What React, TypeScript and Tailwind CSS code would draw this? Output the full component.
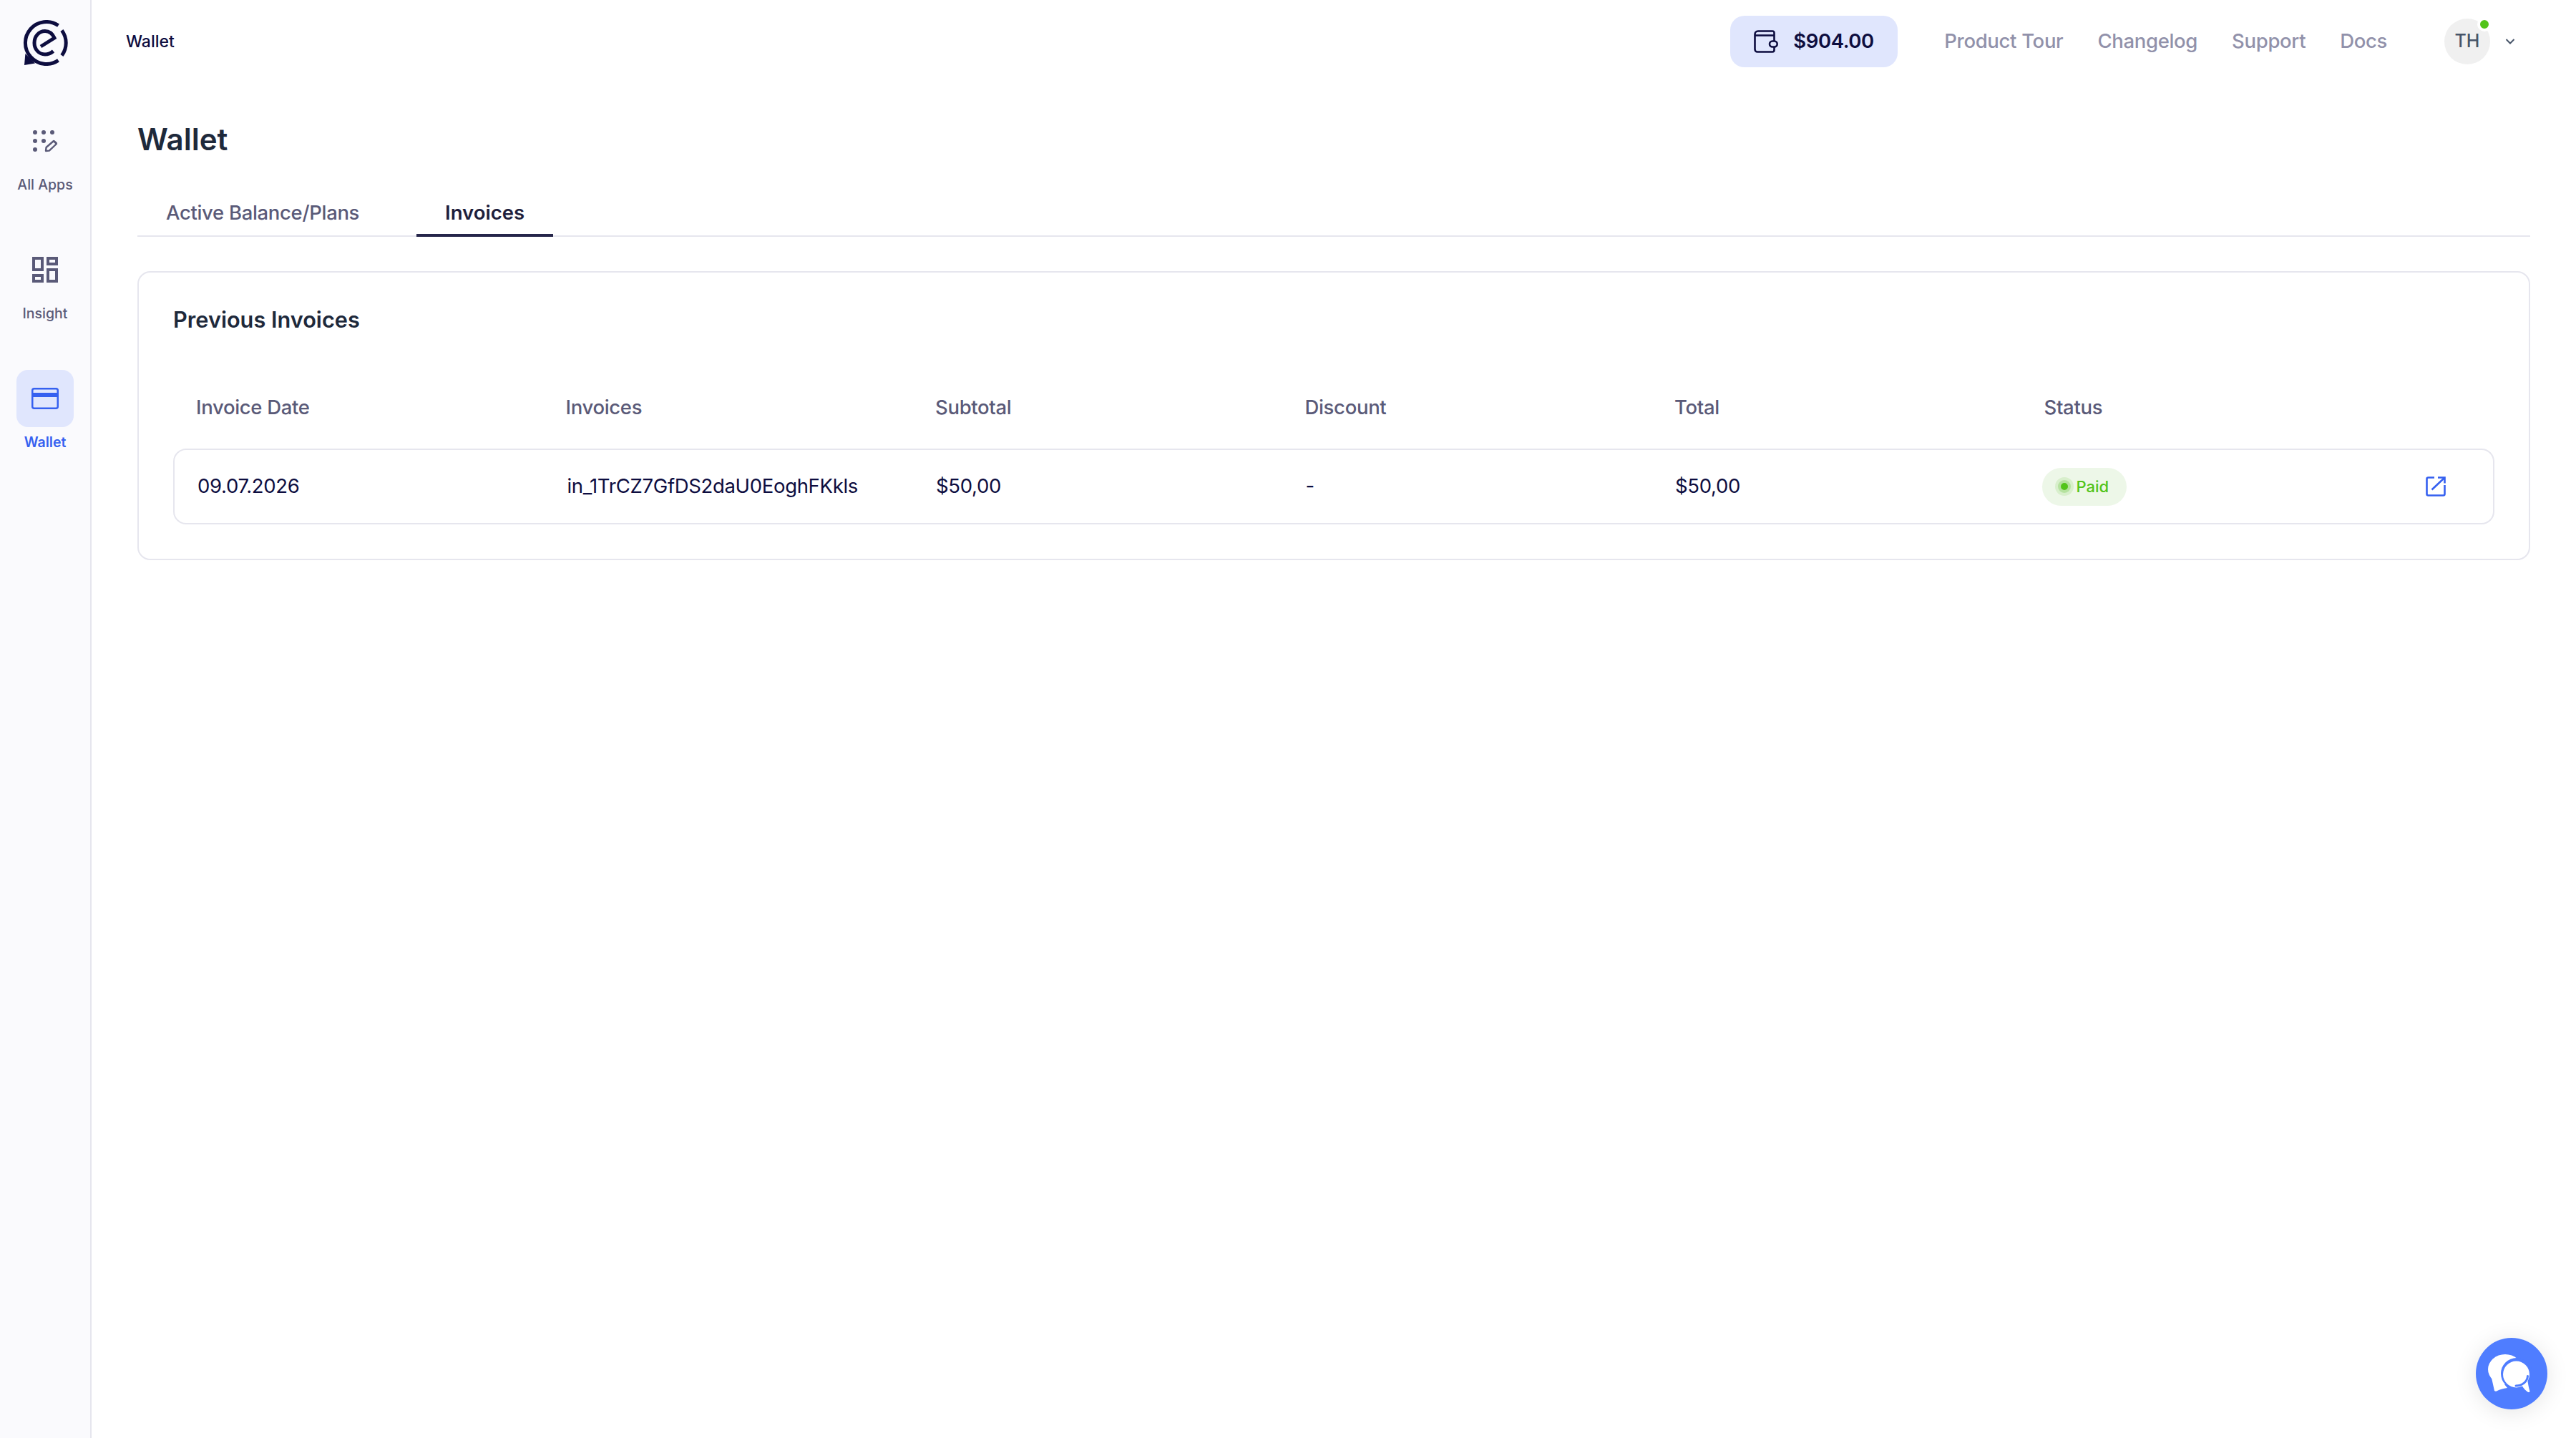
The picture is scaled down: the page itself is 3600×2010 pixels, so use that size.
const FONT = "font-['Inter','Noto_Sans',sans-serif]";

function Logo() {
  return (
    <svg width="64" height="64" viewBox="0 0 64 64" fill="none">
      <path d="M50.5 7.6 A29.5 29.5 0 1 0 50.5 56.4" stroke="#0d0d3f" strokeWidth="5" />
      <path d="M55.4 14.4 A29.5 29.5 0 0 1 55.4 49.6" stroke="#0d0d3f" strokeWidth="5" />
      <path d="M3 63 L4.4 47 L18 60.5 Z" fill="#0d0d3f" />
      <path d="M26 37 L45 25 C42 18.5 37 15.5 32 15.5 C23 15.5 17 23 17 32 C17 41 23.5 48 32 48 C36 48 40 46.5 43.5 43.5" stroke="#0d0d3f" strokeWidth="5" />
    </svg>
  );
}

function AppsIcon() {
  const d = [[51, 185], [63, 185], [75, 185], [51, 197], [63, 197], [51, 209]];
  return (
    <svg width="40" height="36" viewBox="45 179 40 36" fill="none">
      {d.map(([x, y]) => <circle key={`${x}-${y}`} cx={x} cy={y} r="3" fill="#5a5a78" />)}
      <path d="M66 211 L66.6 206 L77 197 L81 201 L70.8 210.6 Z" stroke="#5a5a78" strokeWidth="2.4" strokeLinejoin="round" />
      <path d="M76 198 L78 196 L82 199.6 L80 201.6 Z" fill="#5a5a78" />
    </svg>
  );
}

function InsightIcon() {
  return (
    <svg width="36" height="36" viewBox="0 0 36 36" fill="none" stroke="#5a5a78" strokeWidth="4">
      <rect x="2" y="2" width="12" height="16" />
      <rect x="22" y="2" width="12" height="8" />
      <rect x="2" y="26" width="12" height="8" />
      <rect x="22" y="18" width="12" height="16" />
    </svg>
  );
}

function CardIcon() {
  return (
    <svg width="38" height="30" viewBox="0 0 38 30" fill="none">
      <rect x="1.25" y="1.25" width="35.5" height="27.5" rx="2.5" stroke="#3560f0" strokeWidth="2.5" />
      <rect x="1" y="7" width="36" height="6" fill="#3560f0" />
    </svg>
  );
}

function WalletIcon() {
  return (
    <svg width="34" height="32" viewBox="0 0 34 32" fill="none" stroke="#0d0d3f" strokeWidth="2.6">
      <path d="M28.5 15.5 V4 C28.5 2.4 27.6 1.5 26 1.5 H6 C3 1.5 1.5 3.5 1.5 6 V27 C1.5 29 3 30.5 5 30.5 H26 C27.6 30.5 28.5 29.6 28.5 28 V23.5" />
      <path d="M1.5 7.5 H28.5" />
      <rect x="22" y="15.5" width="10.7" height="8" rx="4" fill="#e0e6fd" />
    </svg>
  );
}

function ExternalIcon() {
  return (
    <svg width="28" height="28" viewBox="0 0 28 28" fill="none" stroke="#3560f0" strokeWidth="2.6">
      <path d="M12 1.5 H3.5 C2.2 1.5 1.5 2.2 1.5 3.5 V24.5 C1.5 25.8 2.2 26.5 3.5 26.5 H24.5 C25.8 26.5 26.5 25.8 26.5 24.5 V12" />
      <path d="M8.5 18.5 L26 2" />
      <path d="M17 1.5 H26.5 V9.5" />
    </svg>
  );
}

function ChatIcon() {
  return (
    <svg width="100" height="100" viewBox="0 0 100 100" fill="none">
      <ellipse cx="41" cy="44" rx="24" ry="21" fill="#fff" />
      <path d="M22 56 L26 74 C27 75 29 75 30 74 C33 72 38 71 44 70 L36 60 Z" fill="#fff" />
      <circle cx="57" cy="50" r="22" fill="#4f7dff" />
      <circle cx="56.5" cy="51" r="18.5" fill="#fff" />
      <path d="M64 66 L72 58 C73 64 74 70 75.5 75 C75 76 74 76 73 76 C70 74 67 71 64 66 Z" fill="#fff" />
      <path d="M56 67 C65 67 72 61 72.5 53.5" stroke="#4f7dff" strokeWidth="3" strokeLinecap="round" />
    </svg>
  );
}

function SideItem({ icon, label, active }: { icon: React.ReactNode; label: string; active?: boolean }) {
  return (
    <div className="flex flex-col items-center">
      <div className={`flex h-20 w-20 items-center justify-center rounded-2xl ${active ? "bg-[#e0e6fd]" : ""}`}>{icon}</div>
      <span className={`mt-[9px] text-[19.5px] leading-6 ${active ? "font-semibold text-[#3560f0]" : "font-medium text-[#5a5a78]"}`}>{label}</span>
    </div>
  );
}

const cols = ["Invoice Date", "Invoices", "Subtotal", "Discount", "Total", "Status"];

export default function App() {
  return (
    <div className={`flex h-screen overflow-hidden bg-white ${FONT}`}>
      <aside className="flex w-[128px] shrink-0 flex-col items-center border-r-2 border-[#e6e6ee] bg-[#fafafd]">
        <div className="mt-7"><Logo /></div>
        <div className="mt-[65px] flex flex-col gap-[67px]">
          <SideItem icon={<AppsIcon />} label="All Apps" />
          <SideItem icon={<InsightIcon />} label="Insight" />
          <SideItem icon={<CardIcon />} label="Wallet" active />
        </div>
      </aside>
      <main className="flex min-w-0 flex-1 flex-col">
        <header className="flex h-[116px] items-center pl-12 pr-[85px]">
          <span className="text-[23px] font-medium text-[#0d0d3f]">Wallet</span>
          <div className="ml-auto flex h-[72px] w-[234px] items-center gap-[21px] rounded-[20px] bg-[#e0e6fd] pl-[33px]">
            <WalletIcon />
            <span className="text-[27.5px] font-semibold tracking-[-0.4px] text-[#0d0d3f]">$904.00</span>
          </div>
          <nav className="ml-[65px] flex gap-[48px] text-[27.5px] font-medium tracking-[-0.33px] text-[#9191aa]">
            <span>Product Tour</span>
            <span>Changelog</span>
            <span>Support</span>
            <span>Docs</span>
          </nav>
          <div className="relative ml-[80px] flex h-16 w-16 items-center justify-center rounded-full bg-[#f0f0f0] text-[25px] font-medium text-[#475569]">
            TH
            <span className="absolute -right-[2px] -top-[2px] h-5 w-5 rounded-full border-4 border-white bg-[#52c41a]" />
          </div>
          <svg className="ml-[21px]" width="14" height="10" viewBox="0 0 14 10" fill="none" stroke="#475569" strokeWidth="2"><path d="M1.5 2 L7 7.5 L12.5 2" /></svg>
        </header>
        <section className="flex flex-col px-[64px]">
          <h1 className="mt-[51px] text-[42px] font-semibold leading-[56px] text-[#1e293b]">Wallet</h1>
          <div className="mt-[55px] flex gap-10 border-b-2 border-[#e6e6ee]">
            <span className="-mb-[2px] border-b-4 border-transparent px-10 pb-[11px] text-[27.5px] font-medium leading-[38px] tracking-[-0.33px] text-[#5a5a78]">Active Balance/Plans</span>
            <span className="-mb-[2px] border-b-4 border-[#26264a] px-10 pb-[11px] text-[27.5px] font-semibold leading-[38px] text-[#1e1e3c]">Invoices</span>
          </div>
          <div className="mt-12 rounded-[18px] border-2 border-[#e6e6ee] px-[48px] pb-[48px] pt-[46px]">
            <h2 className="text-[30.7px] font-semibold leading-[40px] text-[#1e293b]">Previous Invoices</h2>
            <div className="mt-[84px] grid grid-cols-[repeat(6,516.5px)] pl-[32px] text-[27.5px] font-medium leading-[36px] tracking-[-0.33px] text-[#5a5a78]">
              {cols.map((c) => <span key={c}>{c}</span>)}
            </div>
            <div className="mt-[40px] grid h-[106px] grid-cols-[repeat(6,516.5px)_1fr] items-center rounded-[18px] border-2 border-[#e6e6ee] pl-[32px] text-[27.5px] tracking-[-0.33px] text-[#0d0d3f]">
              <span>09.07.2026</span>
              <span>in_1TrCZ7GfDS2daU0EoghFKkls</span>
              <span className="-ml-[1px]">$50,00</span>
              <span className="-ml-[1px]">-</span>
              <span className="-ml-[1px]">$50,00</span>
              <span>
                <span className="-ml-[5px] inline-flex h-[53px] w-[118px] items-center rounded-full bg-[#edf7e8] pl-[18px] align-middle">
                  <span className="flex h-[26px] w-[26px] items-center justify-center rounded-full bg-[#d8efcc]">
                    <span className="flex h-[18px] w-[18px] items-center justify-center rounded-full bg-[#b5e29f]">
                      <span className="h-[10px] w-[10px] rounded-full bg-[#52c41a]" />
                    </span>
                  </span>
                  <span className="ml-[4px] text-[22px] font-medium tracking-normal text-[#52c41a]">Paid</span>
                </span>
              </span>
              <span className="flex pl-[15px]"><ExternalIcon /></span>
            </div>
          </div>
        </section>
      </main>
      <div className="fixed bottom-[40px] right-[40px] flex h-[100px] w-[100px] items-center justify-center rounded-full bg-[#4f7dff] shadow-[0_4px_32px_rgba(0,0,0,0.1)]">
        <ChatIcon />
      </div>
    </div>
  );
}
